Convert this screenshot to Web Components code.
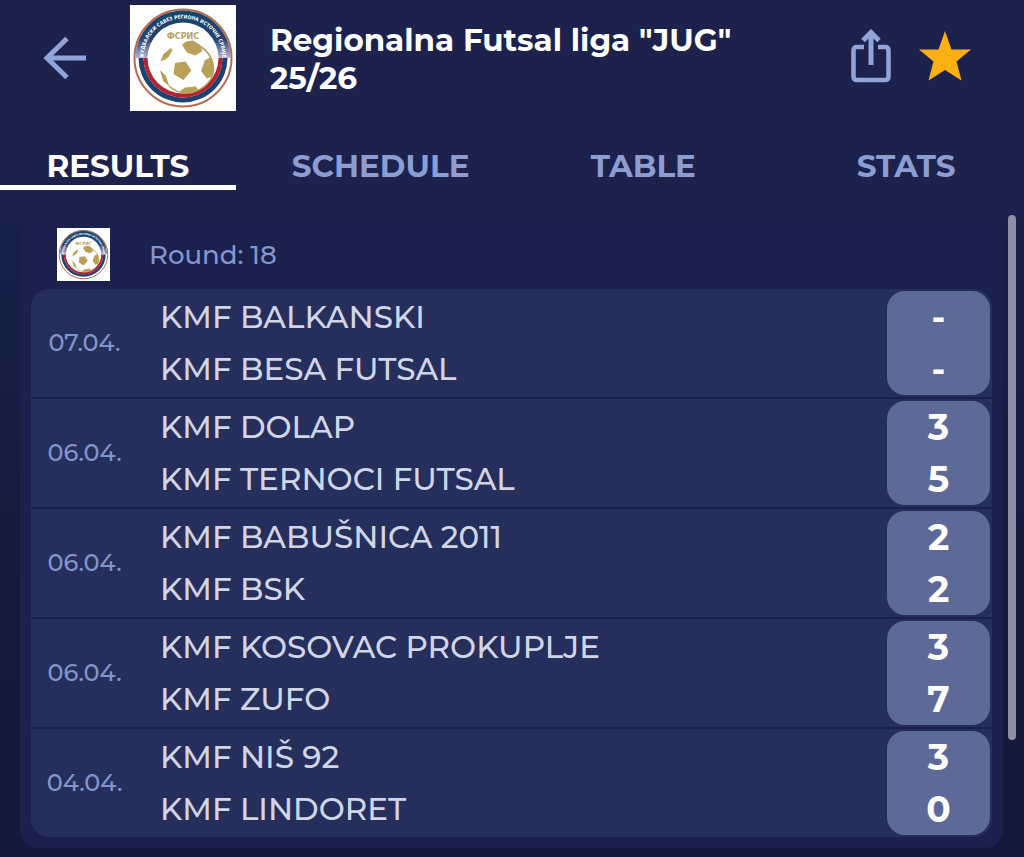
<!DOCTYPE html>
<html lang="en">
<head>
<meta charset="UTF-8">
<meta name="viewport" content="width=device-width, initial-scale=1.0">
<title>Regionalna Futsal liga "JUG" 25/26</title>
<style>
    html {
        min-height: 100%;
        background: #14183a;
    }

    body {
        margin: 0;
        min-height: 100vh;
        font-family: Montserrat, Inter, "Noto Sans", sans-serif;
        color: #fff;
        background: linear-gradient(#1d224c 0, #1d224c 190px, #182048 240px, #151a3b 600px, #14183a 100%);
    }
</style>
</head>
<body>
<league-app>
    <league-header slot="header">Regionalna Futsal liga "JUG"<br>25/26</league-header>
    <tab-bar slot="header">
        <tab-item active>RESULTS</tab-item>
        <tab-item>SCHEDULE</tab-item>
        <tab-item>TABLE</tab-item>
        <tab-item>STATS</tab-item>
    </tab-bar>
    <round-card>
        <span slot="title">Round: 18</span>
        <match-row date="07.04." home="KMF BALKANSKI" away="KMF BESA FUTSAL" home-score="-" away-score="-"></match-row>
        <match-row date="06.04." home="KMF DOLAP" away="KMF TERNOCI FUTSAL" home-score="3" away-score="5"></match-row>
        <match-row date="06.04." home="KMF BABUŠNICA 2011" away="KMF BSK" home-score="2" away-score="2"></match-row>
        <match-row date="06.04." home="KMF KOSOVAC PROKUPLJE" away="KMF ZUFO" home-score="3" away-score="7"></match-row>
        <match-row date="04.04." home="KMF NIŠ 92" away="KMF LINDORET" home-score="3" away-score="0"></match-row>
    </round-card>
</league-app>

<script>
class LeagueApp extends HTMLElement {
    constructor() {
        super();
        const shadow = this.attachShadow({ mode: 'open' });

        shadow.innerHTML = /*html*/`
        <style>
        :host {
            display: block;
        }

        main {
            display: flex;
            gap: 5px;
            padding: 25px 8px 9px 20px;
        }

        .content {
            flex: 1;
            min-width: 0;
            padding-top: 4px;
        }

        .scroll {
            width: 8px;
        }

        .thumb {
            height: 83%;
            border-radius: 4px;
            background: #8e8fa5;
        }
        </style>
        <header><slot name="header"></slot></header>
        <main>
            <div class="content"><slot></slot></div>
            <div class="scroll"><div class="thumb"></div></div>
        </main>
        `;
    }
}

class LeagueLogo extends HTMLElement {
    constructor() {
        super();
        const shadow = this.attachShadow({ mode: 'open' });

        shadow.innerHTML = /*html*/`
        <style>
        :host {
            display: block;
            flex: none;
            width: 106px;
            background: #fff;
        }

        svg {
            display: block;
            width: 100%;
        }

        text {
            font-family: "DejaVu Sans Condensed", "DejaVu Sans", sans-serif;
            font-weight: bold;
        }
        </style>
        <svg viewBox="0 0 106 106" role="img" aria-label="ФСРИС">
            <defs>
                <linearGradient id="ring" x1="0" y1="0" x2="0" y2="1">
                    <stop offset="0" stop-color="#164668"/>
                    <stop offset=".6" stop-color="#25426f"/>
                    <stop offset="1" stop-color="#b9b4d6"/>
                </linearGradient>
                <path id="arc" d="M13.500 53a39.500 39.500 0 0 1 79 0"/>
            </defs>
            <circle cx="53" cy="53" r="48.500" fill="#fff" stroke="#b9694f" stroke-width="2"/>
            <path d="M5.500 53a47.500 47.500 0 0 1 95 0H88.500a35.500 35.500 0 0 0-71 0z" fill="url(#ring)"/>
            <path d="M8.500 53a44.500 44.500 0 0 0 89 0h-5a39.500 39.500 0 0 1-79 0z" fill="#1d4272"/>
            <path d="M13.500 53a39.500 39.500 0 0 0 79 0h-4a35.500 35.500 0 0 1-71 0z" fill="#b3232f"/>
            <text font-size="5" fill="#fff" text-anchor="middle"><textPath href="#arc" startOffset="50%">ФУДБАЛСКИ САВЕЗ РЕГИОНА ИСТОЧНЕ СРБИЈЕ</textPath></text>
            <text x="53" y="34" font-size="9" fill="#b9a263" text-anchor="middle">ФСРИС</text>
            <path d="M70 41c14 9 18 26 8 37s-27 14-39 3" fill="none" stroke="#b8a058" stroke-width="1.500"/>
            <g fill="#b8a058">
                <path d="M45 58l10.500-1.500 6 9-8 9.500-10-6z"/>
                <path d="M52 40l4-3.500 7-1 7 4.500 2.500 6-7 4.500-8.500-3z"/>
                <path d="M75 55l6.500-3 2.500 10-2 9.500-5 2-6-7.500z"/>
                <path d="M41 43l1.500 2-4 7-4 3-4 1 3-7z"/>
                <path d="M30 65l6 6 3.500 10.500-6.500-5.500z"/>
                <path d="M55 82.500l11-1 2.500 4-7 3-12-2z"/>
            </g>
        </svg>
        `;
    }
}

class LeagueHeader extends HTMLElement {
    constructor() {
        super();
        const shadow = this.attachShadow({ mode: 'open' });

        shadow.innerHTML = /*html*/`
        <style>
        :host {
            display: flex;
            align-items: center;
            padding: 5px 53px 0 43px;
        }

        button {
            flex: none;
            padding: 0;
            border: 0;
            background: none;
            color: #93a4d8;
            cursor: pointer;
        }

        svg {
            display: block;
        }

        league-logo {
            margin: 0 34px 0 43px;
        }

        h1 {
            flex: 1;
            margin: 0;
            padding-top: 2px;
            font-size: 31px;
            line-height: 38px;
            font-weight: 700;
        }

        .actions {
            display: flex;
            align-items: center;
            gap: 26px;
            padding-bottom: 4px;
        }
        </style>
        <button aria-label="Back">
            <svg width="44" height="44" viewBox="0 0 44 44" fill="none" stroke="currentColor" stroke-width="5">
                <path d="M24 2.500L4 22l20 19.500M4 22h39"/>
            </svg>
        </button>
        <league-logo></league-logo>
        <h1><slot></slot></h1>
        <div class="actions">
            <button aria-label="Share">
                <svg width="42" height="56" viewBox="0 0 42 56" fill="none" stroke="currentColor" stroke-width="4.500">
                    <path d="M13 19H6q-3.500 0-3.500 3.500v26q0 3.500 3.500 3.500h28q3.500 0 3.500-3.500v-26q0-3.500-3.500-3.500h-7"/>
                    <path d="M20 37V5M12 12.500L20 4.500l8 8" stroke-width="5"/>
                </svg>
            </button>
            <button aria-label="Favourite">
                <svg width="52" height="50" viewBox="0 0 52 50">
                    <path fill="#fbb012" d="M26 0l6.500 18.500H52L37.500 30.500 42.500 49.500 26 39 9.500 49.500l5-19L0 18.500h19.500z"/>
                </svg>
            </button>
        </div>
        `;
    }
}

class TabBar extends HTMLElement {
    constructor() {
        super();
        const shadow = this.attachShadow({ mode: 'open' });

        shadow.innerHTML = /*html*/`
        <style>
        :host {
            display: block;
            padding-top: 36px;
        }

        nav {
            display: flex;
            gap: 27px;
        }
        </style>
        <nav><slot></slot></nav>
        `;
    }
}

class TabItem extends HTMLElement {
    constructor() {
        super();
        const shadow = this.attachShadow({ mode: 'open' });

        shadow.innerHTML = /*html*/`
        <style>
        :host {
            display: block;
            flex: 1 1 0;
            min-width: 0;
        }

        button {
            display: block;
            width: 100%;
            padding: 0;
            border: 0;
            border-bottom: 5px solid transparent;
            background: none;
            color: #8c9dd2;
            font: inherit;
            font-size: 31px;
            line-height: 38px;
            font-weight: 700;
            cursor: pointer;
        }

        :host([active]) button {
            color: #fff;
            border-color: #fff;
        }
        </style>
        <button><slot></slot></button>
        `;
    }
}

class RoundCard extends HTMLElement {
    constructor() {
        super();
        const shadow = this.attachShadow({ mode: 'open' });

        shadow.innerHTML = /*html*/`
        <style>
        :host {
            display: block;
            padding: 9px 11px 11px;
            border-radius: 18px;
            background: #1c204c;
        }

        h2 {
            display: flex;
            align-items: center;
            gap: 39px;
            margin: 0 0 8px;
            padding-left: 26px;
            color: #8496cd;
            font-size: 26px;
            font-weight: 500;
        }

        league-logo {
            width: 53px;
        }

        .matches {
            display: grid;
            gap: 2px;
            border-radius: 18px;
            overflow: hidden;
        }
        </style>
        <h2><league-logo></league-logo><slot name="title"></slot></h2>
        <div class="matches"><slot></slot></div>
        `;
    }
}

class MatchRow extends HTMLElement {
    constructor() {
        super();
        const shadow = this.attachShadow({ mode: 'open' });

        shadow.innerHTML = /*html*/`
        <style>
        :host {
            display: flex;
            align-items: center;
            padding: 2px;
            background: #262e5b;
            line-height: 52px;
        }

        .date {
            width: 103px;
            color: #8294ca;
            font-size: 24px;
            font-weight: 500;
            text-align: center;
        }

        .teams {
            flex: 1;
            padding-left: 24px;
            color: #d0d5e8;
            font-size: 31px;
            font-weight: 500;
        }

        .score {
            width: 103px;
            border-radius: 18px;
            background: #5d6a98;
            font-size: 36px;
            font-weight: 700;
            text-align: center;
        }
        </style>
        <div class="date"></div>
        <div class="teams">
            <div class="home"></div>
            <div class="away"></div>
        </div>
        <div class="score">
            <div class="home-score"></div>
            <div class="away-score"></div>
        </div>
        `;

        this.root = shadow;
    }

    connectedCallback() {
        ['date', 'home', 'away', 'home-score', 'away-score'].forEach(name => {
            this.root.querySelector('.' + name).textContent = this.getAttribute(name);
        });
    }
}

customElements.define('league-app', LeagueApp);
customElements.define('league-logo', LeagueLogo);
customElements.define('league-header', LeagueHeader);
customElements.define('tab-bar', TabBar);
customElements.define('tab-item', TabItem);
customElements.define('round-card', RoundCard);
customElements.define('match-row', MatchRow);
</script>
</body>
</html>
